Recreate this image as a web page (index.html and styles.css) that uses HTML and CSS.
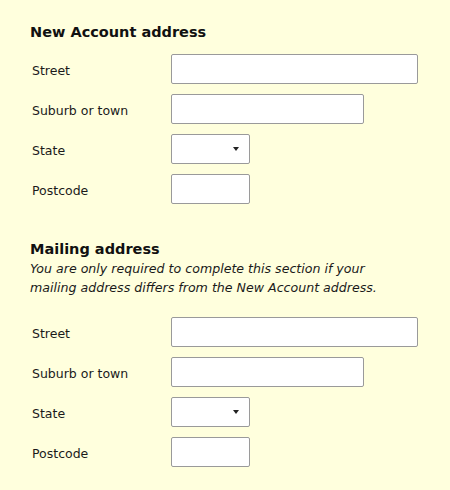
FILE: index.html
```html
<!DOCTYPE html>
<html lang="en">
<head>
<meta charset="utf-8">
<title>Address</title>
<link rel="stylesheet" href="styles.css">
</head>
<body>
<div class="page">
  <section class="section">
    <h2 class="heading">New Account address</h2>
    <div class="rows">
      <label class="label" for="s1">Street</label>
      <input class="field field-long" id="s1" type="text">
      <label class="label" for="t1">Suburb or town</label>
      <input class="field field-mid" id="t1" type="text">
      <label class="label" for="st1">State</label>
      <span class="select-wrap"><select class="field field-short" id="st1"><option></option></select></span>
      <label class="label" for="p1">Postcode</label>
      <input class="field field-short" id="p1" type="text">
    </div>
  </section>
  <section class="section section-mail">
    <h2 class="heading">Mailing address</h2>
    <p class="note">You are only required to complete this section if your mailing address differs from the New Account address.</p>
    <div class="rows rows-mail">
      <label class="label" for="s2">Street</label>
      <input class="field field-long" id="s2" type="text">
      <label class="label" for="t2">Suburb or town</label>
      <input class="field field-mid" id="t2" type="text">
      <label class="label" for="st2">State</label>
      <span class="select-wrap"><select class="field field-short" id="st2"><option></option></select></span>
      <label class="label" for="p2">Postcode</label>
      <input class="field field-short" id="p2" type="text">
    </div>
  </section>
</div>
</body>
</html>
```

FILE: styles.css
```css
html, body {
  margin: 0;
  padding: 0;
  background: #ffffdd;
}
body {
  font-family: "DejaVu Sans", Verdana, sans-serif;
  color: #1a1a1a;
  width: 450px;
  height: 490px;
  overflow: hidden;
}
.page {
  padding: 22px 0 0 30px;
}
.heading {
  margin: 0;
  font-size: 14.5px;
  line-height: 20px;
  font-weight: bold;
  color: #111;
}
.rows {
  display: grid;
  grid-template-columns: 141px auto;
  row-gap: 10px;
  align-items: center;
  justify-items: start;
  margin-top: 12px;
}
.label {
  font-size: 12.5px;
  padding-left: 2px;
  padding-top: 2px;
}
.field {
  box-sizing: border-box;
  height: 30px;
  margin: 0;
  border: 1px solid #9a9a9a;
  border-radius: 2px;
  background: #fff;
  font: inherit;
  padding: 0 4px;
}
.field-long { width: 247px; }
.field-mid { width: 193px; }
.field-short { width: 79px; }
select.field {
  appearance: none;
  -webkit-appearance: none;
  display: block;
}
.select-wrap {
  position: relative;
  display: block;
}
.select-wrap::after {
  content: "";
  position: absolute;
  left: 62px;
  top: 13px;
  width: 0;
  height: 0;
  border-left: 3.5px solid transparent;
  border-right: 3.5px solid transparent;
  border-top: 4px solid #222;
  pointer-events: none;
}
.section-mail {
  margin-top: 35px;
}
.note {
  margin: 0;
  font-size: 12.6px;
  line-height: 19px;
  font-style: italic;
  width: 370px;
}
.rows-mail {
  margin-top: 20px;
}
```
